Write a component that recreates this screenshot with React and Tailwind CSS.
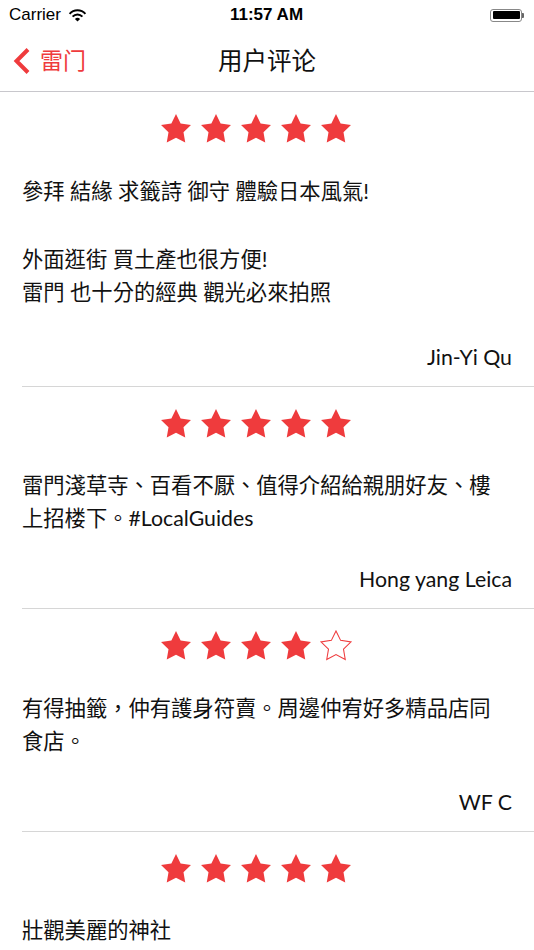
import React from "react";

const RED = "#ef3b3d";

const reviews = [
  {
    rating: 5,
    paragraphs: ["參拜 結緣 求籤詩 御守 體驗日本風氣!", "外面逛街 買土產也很方便!\n雷門 也十分的經典 觀光必來拍照"],
    author: "Jin-Yi Qu",
    long: true,
  },
  {
    rating: 5,
    paragraphs: ["雷門淺草寺、百看不厭、值得介紹給親朋好友、樓上招楼下。#LocalGuides"],
    author: "Hong yang Leica",
  },
  {
    rating: 4,
    paragraphs: ["有得抽籤，仲有護身符賣。周邊仲宥好多精品店同食店。"],
    author: "WF C",
  },
  {
    rating: 5,
    paragraphs: ["壯觀美麗的神社"],
    author: "",
  },
];

function Star({ filled }) {
  return (
    <svg width="30" height="28.5" viewBox="2 2 20 19.02" className="shrink-0 overflow-visible">
      <polygon
        points="12,2 15.09,8.26 22,9.27 17,14.14 18.18,21.02 12,17.77 5.82,21.02 7,14.14 2,9.27 8.91,8.26"
        fill={filled ? RED : "none"}
        stroke={RED}
        strokeWidth={filled ? 0 : 0.7}
      />
    </svg>
  );
}

function Wifi() {
  return (
    <svg width="19" height="13" viewBox="0 0 19 13">
      <path d="M1.6 4.8 A10.5 10.5 0 0 1 17.4 4.8" fill="none" stroke="#000" strokeWidth="2" />
      <path d="M4.6 7.6 A6.6 6.6 0 0 1 14.4 7.6" fill="none" stroke="#000" strokeWidth="2" />
      <path d="M9.5 12.6 L6.9 10 A3.7 3.7 0 0 1 12.1 10 Z" fill="#000" />
    </svg>
  );
}

function Battery() {
  return (
    <div className="flex items-center">
      <div className="w-[32px] h-[13px] rounded-[3px] border border-[#888] p-[1.5px]">
        <div className="w-full h-full bg-black rounded-[1px]" />
      </div>
      <div className="w-[2px] h-[5px] bg-[#666] rounded-r-[1px]" />
    </div>
  );
}

function ReviewCard({ review }) {
  return (
    <div className="pl-[22px] pr-[22px]">
      <div className="pt-[22px] pl-[139px] flex gap-[10px]">
        {[1, 2, 3, 4, 5].map((n) => (
          <Star key={n} filled={n <= review.rating} />
        ))}
      </div>
      <div className="mt-[32px] w-[475px] text-[21.3px] leading-[33px] text-[#111] whitespace-pre-line">
        {review.paragraphs.map((p, i) => (
          <p key={i} className={i > 0 ? "mt-[35px]" : ""}>
            {p}
          </p>
        ))}
      </div>
      {review.author && (
        <div
          className={
            (review.long ? "mt-[32px]" : "mt-[28px]") +
            " text-right text-[21.3px] leading-[33px] text-[#111]"
          }
        >
          {review.author}
        </div>
      )}
      <div className="mt-[12px] -mr-[22px] h-px bg-[#d6d6d6]" />
    </div>
  );
}

export default function App() {
  return (
    <div
      className="w-[534px] h-[950px] overflow-hidden bg-white"
      style={{ fontFamily: '"Lato", "Noto Sans CJK TC", sans-serif' }}
    >
      {/* status bar */}
      <div
        className="h-[30px] flex items-center px-[9px] text-[17px] text-black"
        style={{ fontFamily: '"Liberation Sans", "Noto Sans", sans-serif' }}
      >
        <div className="flex-1 flex items-center gap-[7px]">
          <span>Carrier</span>
          <Wifi />
        </div>
        <div className="font-bold">11:57 AM</div>
        <div className="flex-1 flex justify-end pr-[1px]">
          <Battery />
        </div>
      </div>

      {/* nav bar */}
      <div className="h-[62px] flex items-center border-b border-[#c8c7cc] relative">
        <div className="flex items-center pl-[12px] gap-[8px]">
          <svg width="20" height="28" viewBox="0 0 20 28">
            <path d="M16 2.5 L4.5 14 L16 25.5" fill="none" stroke={RED} strokeWidth="4" />
          </svg>
          <span
            className="text-[23px] leading-none pb-[2px]"
            style={{ color: RED, fontFamily: '"Noto Sans CJK SC", sans-serif' }}
          >
            雷门
          </span>
        </div>
        <div
          className="absolute inset-0 flex items-center justify-center text-[24.5px] text-[#111]"
          style={{ fontFamily: '"Noto Sans CJK SC", sans-serif' }}
        >
          用户评论
        </div>
      </div>

      {reviews.map((r, i) => (
        <ReviewCard key={i} review={r} />
      ))}
    </div>
  );
}
